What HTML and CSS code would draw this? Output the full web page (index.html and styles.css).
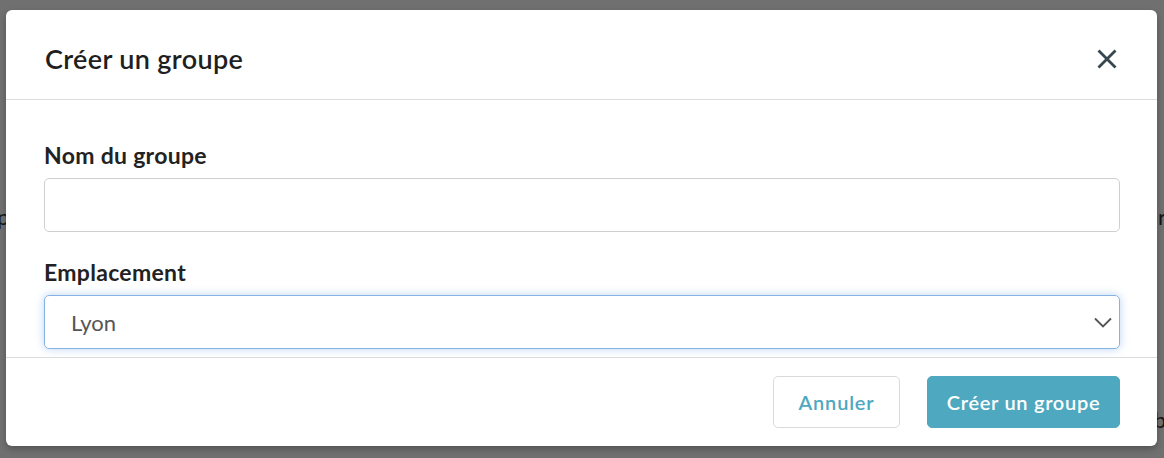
FILE: index.html
```html
<!DOCTYPE html>
<html lang="fr">
<head>
<meta charset="utf-8">
<title>Créer un groupe</title>
<link rel="stylesheet" href="styles.css">
</head>
<body>
<div class="page">
  <div class="page-row row-1"><span>p</span><span>r</span></div>
  <div class="page-row row-2"><span></span><span>b</span></div>
</div>
<div class="overlay"></div>
<div class="modal" role="dialog" aria-labelledby="modal-title">
  <header class="modal-header">
    <h2 class="modal-title" id="modal-title">Créer un groupe</h2>
    <button class="close-btn" type="button" aria-label="Fermer">
      <svg width="20" height="20" viewBox="0 0 20 20"><path d="M1.5 1.5 L18.5 18.5 M18.5 1.5 L1.5 18.5" stroke="#37474f" stroke-width="2.8" stroke-linecap="butt" fill="none"/></svg>
    </button>
  </header>
  <div class="modal-body">
    <div class="field">
      <label class="field-label" for="name">Nom du groupe</label>
      <input class="field-input" id="name" type="text">
    </div>
    <div class="field">
      <label class="field-label" for="loc">Emplacement</label>
      <div class="select focused" id="loc">
        <span class="select-value">Lyon</span>
        <svg class="chevron" width="18" height="11" viewBox="0 0 18 11"><path d="M1 1.5 L9 9.5 L17 1.5" stroke="#555" stroke-width="1.8" fill="none"/></svg>
      </div>
    </div>
  </div>
  <footer class="modal-footer">
    <button class="btn btn-secondary" type="button">Annuler</button>
    <button class="btn btn-primary" type="button">Créer un groupe</button>
  </footer>
</div>
</body>
</html>
```

FILE: styles.css
```css
* { box-sizing: border-box; }
html, body { margin: 0; padding: 0; }
body {
  width: 1164px;
  height: 458px;
  overflow: hidden;
  font-family: "Source Sans Pro", Lato, "Liberation Sans", sans-serif;
  background: #ffffff;
  position: relative;
}
.page {
  padding-top: 203px;
  color: #333;
  font-size: 22px;
}
.page-row {
  display: flex;
  justify-content: space-between;
  margin: 0 -2px 0 -3px;
}
.row-2 { margin-top: 176px; }
.overlay {
  position: absolute;
  inset: 0;
  background: rgba(0, 0, 0, 0.56);
}
.modal {
  position: absolute;
  left: 6px;
  top: 10px;
  width: 1151px;
  height: 436px;
  background: #fff;
  border-radius: 6px;
  box-shadow: 0 3px 6px rgba(0, 0, 0, 0.25);
  display: flex;
  flex-direction: column;
  overflow: hidden;
}
.modal-header {
  height: 90px;
  flex: none;
  display: flex;
  align-items: center;
  justify-content: space-between;
  padding: 8px 40px 0 39px;
  border-bottom: 1px solid #dcdcdc;
}
.modal-title {
  margin: 0;
  font-size: 27px;
  letter-spacing: 0.35px;
  font-weight: 600;
  color: #1f1f1f;
}
.close-btn {
  border: 0;
  background: none;
  padding: 0;
  width: 20px;
  height: 20px;
  display: flex;
}
.modal-body {
  flex: 1;
  overflow: hidden;
  padding: 40px 37px 0 38px;
}
.field + .field { margin-top: 25px; }
.field-label {
  display: block;
  font-size: 23px;
  letter-spacing: 0.3px;
  line-height: 30px;
  font-weight: 700;
  color: #222;
  margin-bottom: 8px;
}
.field-input {
  display: block;
  width: 100%;
  height: 54px;
  border: 1px solid #cfcfcf;
  border-radius: 5px;
  background: #fff;
  font: inherit;
}
.select {
  height: 54px;
  border: 1px solid #86b3e3;
  border-radius: 5px;
  display: flex;
  align-items: center;
  justify-content: space-between;
  padding: 0 7px 0 26px;
  box-shadow: 0 0 9px rgba(102, 160, 233, 0.45);
}
.select-value {
  font-size: 22px;
  color: #555;
}
.modal-footer {
  height: 89px;
  flex: none;
  border-top: 1px solid #dcdcdc;
  display: flex;
  align-items: center;
  justify-content: flex-end;
  gap: 27px;
  padding: 0 37px 0 0;
}
.btn {
  height: 52px;
  border-radius: 5px;
  font-family: inherit;
  font-size: 20px;
  font-weight: 600;
  padding: 0;
  cursor: pointer;
}
.btn-secondary {
  width: 127px;
  background: #fff;
  border: 1px solid #dadada;
  color: #4ea8c0;
  letter-spacing: 0.8px;
}
.btn-primary {
  width: 193px;
  background: #4ea8c0;
  border: 1px solid #4ea8c0;
  color: #fff;
  letter-spacing: 0.7px;
}
```
